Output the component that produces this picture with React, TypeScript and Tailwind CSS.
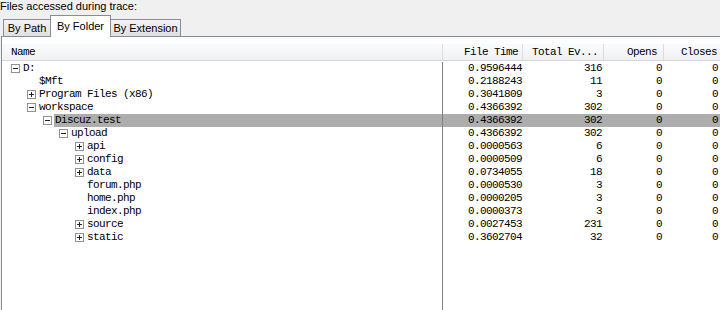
import React from 'react';

interface RowProps {
  name: string;
  level: number;
  expander: '+' | '-' | null;
  fileTime: string;
  total: number;
  opens: number;
  closes: number;
  selected?: boolean;
}

const ROWS: RowProps[] = [
  { name: 'D:', level: 0, expander: '-', fileTime: '0.9596444', total: 316, opens: 0, closes: 0 },
  { name: '$Mft', level: 1, expander: null, fileTime: '0.2188243', total: 11, opens: 0, closes: 0 },
  { name: 'Program Files (x86)', level: 1, expander: '+', fileTime: '0.3041809', total: 3, opens: 0, closes: 0 },
  { name: 'workspace', level: 1, expander: '-', fileTime: '0.4366392', total: 302, opens: 0, closes: 0 },
  { name: 'Discuz.test', level: 2, expander: '-', fileTime: '0.4366392', total: 302, opens: 0, closes: 0, selected: true },
  { name: 'upload', level: 3, expander: '-', fileTime: '0.4366392', total: 302, opens: 0, closes: 0 },
  { name: 'api', level: 4, expander: '+', fileTime: '0.0000563', total: 6, opens: 0, closes: 0 },
  { name: 'config', level: 4, expander: '+', fileTime: '0.0000509', total: 6, opens: 0, closes: 0 },
  { name: 'data', level: 4, expander: '+', fileTime: '0.0734055', total: 18, opens: 0, closes: 0 },
  { name: 'forum.php', level: 4, expander: null, fileTime: '0.0000530', total: 3, opens: 0, closes: 0 },
  { name: 'home.php', level: 4, expander: null, fileTime: '0.0000205', total: 3, opens: 0, closes: 0 },
  { name: 'index.php', level: 4, expander: null, fileTime: '0.0000373', total: 3, opens: 0, closes: 0 },
  { name: 'source', level: 4, expander: '+', fileTime: '0.0027453', total: 231, opens: 0, closes: 0 },
  { name: 'static', level: 4, expander: '+', fileTime: '0.3602704', total: 32, opens: 0, closes: 0 },
];

// indentation per tree level, written out so tailwind picks them up
const INDENT = ['pl-[9px]', 'pl-[25px]', 'pl-[41px]', 'pl-[57px]', 'pl-[73px]'];

const mono = "font-['Liberation_Mono',monospace] text-[11px] tracking-[-0.6px]";

function Expander({ kind }: { kind: '+' | '-' | null }) {
  if (!kind) return <span className="w-[11px] shrink-0" />;
  return (
    <svg width="9" height="9" viewBox="0 0 9 9" className="mr-[2px] shrink-0">
      <rect x="0.5" y="0.5" width="8" height="8" fill="#fff" stroke="#919191" />
      <line x1="2" y1="4.5" x2="7" y2="4.5" stroke="#222" />
      {kind === '+' && <line x1="4.5" y1="2" x2="4.5" y2="7" stroke="#222" />}
    </svg>
  );
}

export default function App() {
  return (
    <div className="flex h-[310px] w-[720px] flex-col overflow-hidden bg-[#f0f0f0] font-['Liberation_Sans',sans-serif] text-[11px] text-black">
      <div className="h-[14px] leading-[12px]">Files accessed during trace:</div>

      <div className="flex h-[22px] items-end pl-[3px]">
        <div className="flex h-[17px] w-[48px] items-center justify-center border border-b-0 border-[#898c95] bg-linear-to-b from-[#f3f3f3] to-[#e0e0e0] pt-px">
          By Path
        </div>
        <div className="relative z-10 -mb-px -ml-px flex h-[22px] w-[61px] items-start justify-center border border-b-0 border-[#898c95] bg-white pt-[2px]">
          By Folder
        </div>
        <div className="-ml-px flex h-[17px] w-[71px] items-center justify-center border border-b-0 border-[#898c95] bg-linear-to-b from-[#f3f3f3] to-[#e0e0e0] pt-px">
          By Extension
        </div>
      </div>

      <div className="ml-px flex min-h-0 flex-1 flex-col border-l border-t border-[#898c95] bg-white pt-[7px]">
        <div
          className={`flex h-[17px] shrink-0 items-center border-b border-[#d5d5d5] bg-linear-to-b from-[#fafbfc] to-[#f0f1f3] ${mono}`}
        >
          <div className="w-[441px] shrink-0 border-r border-[#dcdcdc] pl-[9px] leading-[16px]">Name</div>
          <div className="w-[80px] shrink-0 border-r border-[#dcdcdc] pr-[4px] text-right leading-[16px]">File Time</div>
          <div className="w-[81px] shrink-0 border-r border-[#dcdcdc] pr-[5px] text-right leading-[16px]">Total Ev...</div>
          <div className="w-[60px] shrink-0 border-r border-[#dcdcdc] pr-[6px] text-right leading-[16px]">Opens</div>
          <div className="w-[60px] shrink-0 border-r border-[#dcdcdc] pr-[6px] text-right leading-[16px]">Closes</div>
          <div className="flex-1" />
        </div>

        <div className={`flex min-h-0 flex-1 pt-px ${mono}`}>
          <div className="w-[441px] shrink-0 border-r border-[#828282]">
            {ROWS.map((row, index) => (
              <div key={index} className={`flex h-[13px] items-center ${INDENT[row.level]}`}>
                <Expander kind={row.expander} />
                <span className={`h-[13px] flex-1 pl-px leading-[13px] ${row.selected ? 'bg-[#adadad]' : ''}`}>
                  {row.name}
                </span>
              </div>
            ))}
          </div>
          <div className="flex-1">
            {ROWS.map((row, index) => (
              <div
                key={index}
                className={`flex h-[13px] leading-[13px] ${row.selected ? 'bg-[#adadad]' : ''}`}
              >
                <div className="w-[80px] shrink-0 pr-[1px] text-right">{row.fileTime}</div>
                <div className="w-[81px] shrink-0 pr-[2px] text-right">{row.total}</div>
                <div className="w-[60px] shrink-0 pr-[2px] text-right">{row.opens}</div>
                <div className="w-[60px] shrink-0 pr-[6px] text-right">{row.closes}</div>
              </div>
            ))}
          </div>
        </div>
      </div>
    </div>
  );
}
